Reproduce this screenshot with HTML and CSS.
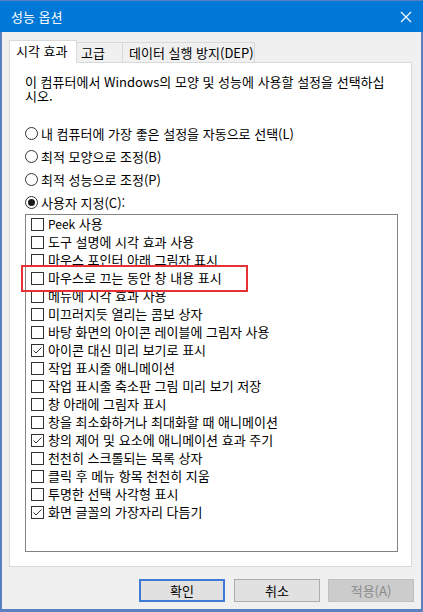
FILE: index.html
```html
<!DOCTYPE html>
<html lang="ko">
<head>
<meta charset="utf-8">
<title>성능 옵션</title>
<link rel="stylesheet" href="styles.css">
</head>
<body>
<div class="window">
  <div class="titlebar">
    <span class="title">성능 옵션</span>
    <svg class="close" width="12" height="12" viewBox="0 0 12 12"><path d="M1 1 L11 11 M11 1 L1 11" stroke="#fff" stroke-width="1.2" fill="none"/></svg>
  </div>
  <div class="frame">
    <div class="tabs">
      <div class="tab active tab-visual">시각 효과</div>
      <div class="tab tab-adv">고급</div>
      <div class="tab tab-dep">데이터 실행 방지(DEP)</div>
    </div>
    <div class="panel">
      <p class="desc">이 컴퓨터에서 Windows의 모양 및 성능에 사용할 설정을 선택하십시오.</p>
      <div class="radios">
        <div class="radio-row"><span class="radio"></span><span>내 컴퓨터에 가장 좋은 설정을 자동으로 선택(L)</span></div>
        <div class="radio-row"><span class="radio"></span><span>최적 모양으로 조정(B)</span></div>
        <div class="radio-row"><span class="radio"></span><span>최적 성능으로 조정(P)</span></div>
        <div class="radio-row"><span class="radio checked"></span><span>사용자 지정(C):</span></div>
      </div>
      <div class="listbox">
        <div class="item"><span class="cb"></span><span><span class="en">Peek</span> 사용</span></div>
        <div class="item"><span class="cb"></span><span>도구 설명에 시각 효과 사용</span></div>
        <div class="item"><span class="cb"></span><span>마우스 포인터 아래 그림자 표시</span></div>
        <div class="item"><span class="cb"></span><span>마우스로 끄는 동안 창 내용 표시</span></div>
        <div class="item"><span class="cb"></span><span>메뉴에 시각 효과 사용</span></div>
        <div class="item"><span class="cb"></span><span>미끄러지듯 열리는 콤보 상자</span></div>
        <div class="item"><span class="cb"></span><span>바탕 화면의 아이콘 레이블에 그림자 사용</span></div>
        <div class="item"><span class="cb"><svg width="13" height="13" viewBox="0 0 13 13"><polyline points="2.5,6.5 5,9 10.5,3.5" fill="none" stroke="#333" stroke-width="1"/></svg></span><span>아이콘 대신 미리 보기로 표시</span></div>
        <div class="item"><span class="cb"></span><span>작업 표시줄 애니메이션</span></div>
        <div class="item"><span class="cb"></span><span>작업 표시줄 축소판 그림 미리 보기 저장</span></div>
        <div class="item"><span class="cb"></span><span>창 아래에 그림자 표시</span></div>
        <div class="item"><span class="cb"></span><span>창을 최소화하거나 최대화할 때 애니메이션</span></div>
        <div class="item"><span class="cb"><svg width="13" height="13" viewBox="0 0 13 13"><polyline points="2.5,6.5 5,9 10.5,3.5" fill="none" stroke="#333" stroke-width="1"/></svg></span><span>창의 제어 및 요소에 애니메이션 효과 주기</span></div>
        <div class="item"><span class="cb"></span><span>천천히 스크롤되는 목록 상자</span></div>
        <div class="item"><span class="cb"></span><span>클릭 후 메뉴 항목 천천히 지움</span></div>
        <div class="item"><span class="cb"></span><span>투명한 선택 사각형 표시</span></div>
        <div class="item"><span class="cb"><svg width="13" height="13" viewBox="0 0 13 13"><polyline points="2.5,6.5 5,9 10.5,3.5" fill="none" stroke="#333" stroke-width="1"/></svg></span><span>화면 글꼴의 가장자리 다듬기</span></div>
        <div class="highlight"></div>
      </div>
    </div>
    <div class="buttons">
      <div class="btn default">확인</div>
      <div class="btn">취소</div>
      <div class="btn disabled">적용(A)</div>
    </div>
  </div>
</div>
</body>
</html>
```
FILE: styles.css
```css
* { box-sizing: border-box; }
html, body { margin: 0; padding: 0; }
body {
  width: 423px;
  height: 612px;
  overflow: hidden;
  font-family: "Noto Sans CJK KR", sans-serif;
  font-size: 13px;
  color: #000;
  background: #f0f0f0;
}
.en { font-size: 12px; }
.window {
  width: 423px;
  height: 612px;
  display: flex;
  flex-direction: column;
}
.titlebar {
  height: 32px;
  background: #0078d7;
  border-top: 1px solid #5b80bf;
  display: flex;
  align-items: center;
  justify-content: space-between;
  padding: 0 11px 0 11px;
  color: #fff;
}
.title { line-height: 14px; }
.close { display: block; }
.frame {
  flex: 1;
  display: flex;
  flex-direction: column;
  background: #f0f0f0;
  border: 2px solid #5b80bf;
  border-top: 0;
  border-bottom-width: 3px;
  padding: 8px 9px 7px 7px;
}
.tabs {
  height: 22px;
  display: flex;
  align-items: flex-end;
}
.tab {
  height: 20px;
  border: 1px solid #d9d9d9;
  border-bottom: 0;
  background: #f0f0f0;
  display: flex;
  align-items: center;
  padding-left: 6px;
  line-height: 14px;
  margin-left: -1px;
  white-space: nowrap;
}
.tab.active {
  height: 23px;
  margin-bottom: -1px;
  margin-left: 0;
  background: #fff;
  position: relative;
  z-index: 1;
  padding-bottom: 2px;
}
.tab-visual { width: 68px; }
.tab-adv { width: 47px; padding-left: 4px; }
.tab-dep { width: 133px; padding-left: 6px; }
.panel {
  flex: 1;
  display: flex;
  flex-direction: column;
  background: #fff;
  border: 1px solid #d9d9d9;
  padding: 12px 13px 14px 15px;
}
.desc {
  margin: 0 0 19px 0;
  width: 364px;
  height: 28px;
  line-height: 14px;
  word-break: break-all;
}
.radio-row {
  height: 23px;
  display: flex;
  align-items: center;
  gap: 3px;
  line-height: 14px;
  white-space: nowrap;
}
.radio {
  width: 13px;
  height: 13px;
  border: 1px solid #333;
  border-radius: 50%;
  background: #fff;
  flex: none;
  display: flex;
  align-items: center;
  justify-content: center;
}
.radio.checked::after {
  content: "";
  width: 7px;
  height: 7px;
  border-radius: 50%;
  background: #1a1a1a;
}
.listbox {
  flex: 1;
  border: 1px solid #828282;
  background: #fff;
  position: relative;
  padding-left: 5px;
}
.item {
  height: 18px;
  display: flex;
  align-items: center;
  gap: 4px;
  line-height: 14px;
  white-space: nowrap;
}
.cb {
  width: 13px;
  height: 13px;
  border: 1px solid #333;
  background: #fff;
  flex: none;
  position: relative;
}
.cb svg {
  position: absolute;
  left: -1px;
  top: -1px;
}
.highlight {
  position: absolute;
  left: -5px;
  top: 50px;
  width: 227px;
  height: 27px;
  border: 2px solid #e53035;
}
.buttons {
  margin-top: 12px;
  margin-right: -2px;
  height: 23px;
  display: flex;
  justify-content: flex-end;
  gap: 8px;
}
.btn {
  width: 86px;
  height: 23px;
  background: #e1e1e1;
  border: 1px solid #adadad;
  display: flex;
  align-items: center;
  justify-content: center;
  line-height: 14px;
}
.btn.default {
  border: 2px solid #3f7ad6;
  margin-right: 1px;
}
.btn.disabled {
  background: #cccccc;
  border-color: #bfbfbf;
  color: #8a8a8a;
}
```
